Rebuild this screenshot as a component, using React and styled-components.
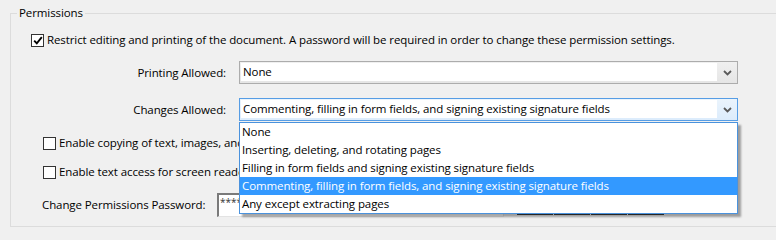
import React from "react";
import styled, { createGlobalStyle } from "styled-components";

const GlobalStyle = createGlobalStyle`
  html, body {
    margin: 0;
    background: #f0f0f0;
  }
  body {
    width: 776px;
    height: 239px;
    overflow: hidden;
    font-family: "Open Sans", "Noto Sans", sans-serif;
    font-size: 11.5px;
    letter-spacing: -0.1px;
    line-height: 16px;
    color: #000;
  }
`;

const Group = styled.fieldset`
  margin: 5px 0 0 10px;
  width: 800px;
  border: 1px solid #dcdcdc;
  padding: 11px 0 9px 6px;
  box-sizing: border-box;
`;

const Legend = styled.legend`
  padding: 0 2px;
  line-height: 16px;
`;

const Body = styled.div`
  display: flex;
  flex-direction: column;
  gap: 13px;
  padding-left: 14px;
`;

const CheckRow = styled.label`
  display: flex;
  align-items: center;
  gap: 3px;
  height: 16px;
  margin-left: ${(p) => (p.$indent ? "12px" : "0")};
  white-space: nowrap;
`;

const Box = styled.span`
  width: 13px;
  height: 13px;
  box-sizing: border-box;
  border: 1px solid #333;
  background: #fff;
  display: flex;
  align-items: center;
  justify-content: center;
  flex: none;
`;

const FieldRow = styled.div`
  display: flex;
  align-items: flex-start;
  gap: 13px;
  height: 24px;
  position: relative;
`;

const FieldLabel = styled.span`
  width: 195px;
  text-align: right;
  line-height: 23px;
`;

const Select = styled.div`
  position: relative;
  width: 499px;
  height: 23px;
  box-sizing: border-box;
  border: 1px solid ${(p) => (p.$focused ? "#569de5" : "#acacac")};
  background: ${(p) =>
    p.$focused
      ? "linear-gradient(#ebf4fc, #dcecfc)"
      : "linear-gradient(#f0f0f0, #e5e5e5)"};
  display: flex;
  align-items: stretch;
`;

const SelectValue = styled.div`
  flex: 1;
  margin: 1px 0 2px 1px;
  background: #fff;
  padding-left: 2px;
  line-height: 18px;
  white-space: nowrap;
  overflow: hidden;
`;

const Arrow = styled.div`
  width: 20px;
  display: flex;
  align-items: center;
  justify-content: center;
`;

const List = styled.ul`
  position: absolute;
  z-index: 2;
  top: 100%;
  left: 208px;
  width: 499px;
  margin: 0;
  padding: 0;
  list-style: none;
  box-sizing: border-box;
  border: 1px solid #4a92dd;
  background: #fff;
  box-shadow: 3px 3px 2px rgba(0, 0, 0, 0.35);
`;

const Option = styled.li`
  height: 18px;
  line-height: 18px;
  padding-left: 2px;
  white-space: nowrap;
  background: ${(p) => (p.$active ? "#3399ff" : "transparent")};
  color: ${(p) => (p.$active ? "#fff" : "#000")};
`;

const PasswordRow = styled.div`
  display: flex;
  align-items: flex-start;
  height: 24px;
  margin-left: 11px;
`;

const PasswordLabel = styled.span`
  width: 175px;
  line-height: 24px;
`;

const PasswordInput = styled.div`
  width: 287px;
  height: 24px;
  box-sizing: border-box;
  border-top: 2px solid #7a7a7a;
  border-left: 2px solid #7a7a7a;
  border-right: 1px solid #e3e3e3;
  border-bottom: 1px solid #e3e3e3;
  background: #fff;
  padding-left: 1px;
  line-height: 14px;
  font-size: 10px;
  letter-spacing: 0;
  color: #333;
`;

const Meter = styled.div`
  display: flex;
  gap: 1px;
  margin: 2px 0 0 13px;
`;

const Segment = styled.div`
  width: 36px;
  height: 20px;
  background: linear-gradient(#6a6a6a, #3a3a3a);
`;

const Check = () => (
  <svg width="10" height="9" viewBox="0 0 10 9">
    <path d="M1.2 4.6 L3.8 7.4 L8.8 1.2" fill="none" stroke="#000" strokeWidth="1.9" />
  </svg>
);

const Chevron = () => (
  <svg width="9" height="6" viewBox="0 0 9 6">
    <path d="M1 1 L4.5 4.5 L8 1" fill="none" stroke="#5a5a5a" strokeWidth="1.8" />
  </svg>
);

const options = [
  "None",
  "Inserting, deleting, and rotating pages",
  "Filling in form fields and signing existing signature fields",
  "Commenting, filling in form fields, and signing existing signature fields",
  "Any except extracting pages",
];

export default function App() {
  return (
    <>
      <GlobalStyle />
      <Group>
        <Legend>Permissions</Legend>
        <Body>
          <CheckRow>
            <Box>
              <Check />
            </Box>
            Restrict editing and printing of the document. A password will be required in order to change these permission settings.
          </CheckRow>
          <FieldRow>
            <FieldLabel>Printing Allowed:</FieldLabel>
            <Select>
              <SelectValue>None</SelectValue>
              <Arrow>
                <Chevron />
              </Arrow>
            </Select>
          </FieldRow>
          <FieldRow>
            <FieldLabel>Changes Allowed:</FieldLabel>
            <Select $focused>
              <SelectValue>{options[3]}</SelectValue>
              <Arrow>
                <Chevron />
              </Arrow>
            </Select>
            <List>
              {options.map((o, i) => (
                <Option key={o} $active={i === 3}>
                  {o}
                </Option>
              ))}
            </List>
          </FieldRow>
          <CheckRow $indent>
            <Box />
            Enable copying of text, images, and other content
          </CheckRow>
          <CheckRow $indent>
            <Box />
            Enable text access for screen reader devices for the visually impaired
          </CheckRow>
          <PasswordRow>
            <PasswordLabel>Change Permissions Password:</PasswordLabel>
            <PasswordInput>******</PasswordInput>
            <Meter>
              <Segment />
              <Segment />
              <Segment />
              <Segment />
            </Meter>
          </PasswordRow>
        </Body>
      </Group>
    </>
  );
}
